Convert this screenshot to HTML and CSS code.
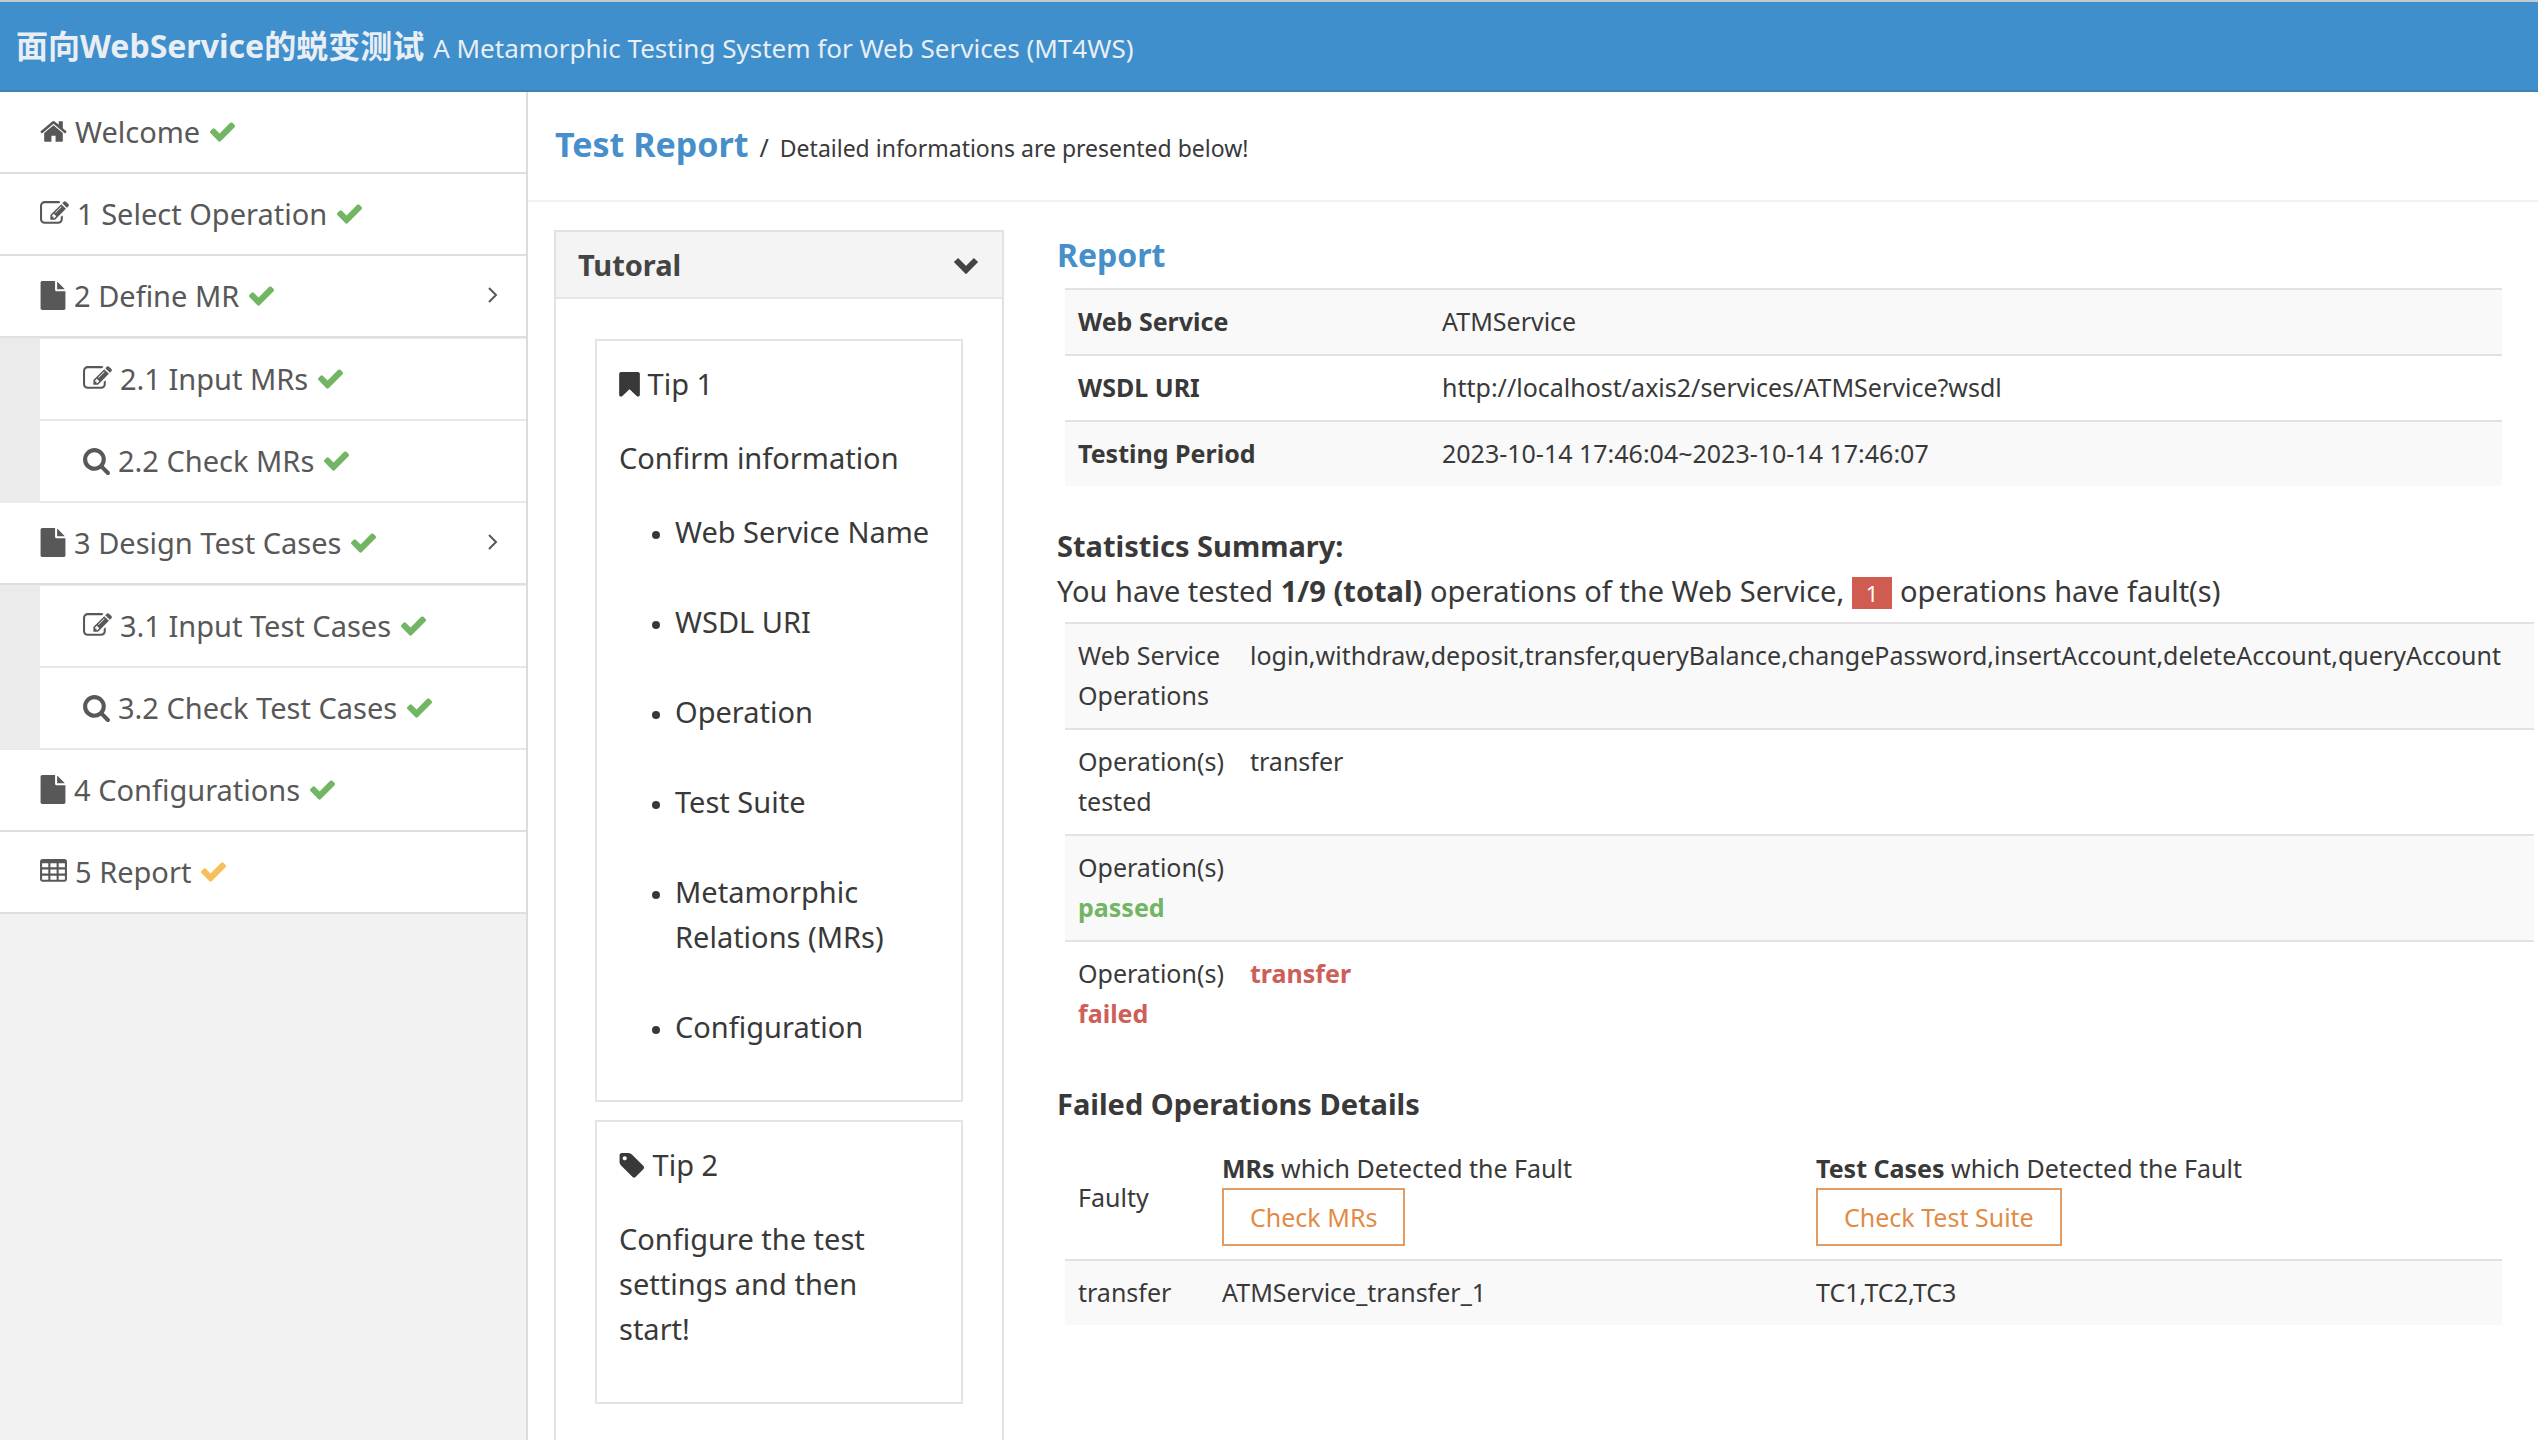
FILE: index.html
```html
<!DOCTYPE html>
<html lang="en">
<head>
<meta charset="utf-8">
<meta name="viewport" content="width=device-width, initial-scale=1">
<title>Test Report - MT4WS</title>
<link rel="stylesheet" href="styles.css">
</head>
<body>
<svg class="sprite" aria-hidden="true">
  <symbol id="home" viewBox="64 0 1664 1792"><path d="M1472 992v480q0 26-19 45t-45 19h-384v-384h-256v384h-384q-26 0-45-19t-19-45v-480q0-1 .5-3t.5-3l575-474 575 474q1 2 1 6zm223-69l-62 74q-8 9-21 11h-3q-13 0-21-7l-692-577-692 577q-12 8-24 7-13-2-21-11l-62-74q-8-10-7-23.5t11-21.5l719-599q32-26 76-26t76 26l244 204v-195q0-14 9-23t23-9h192q14 0 23 9t9 23v408l219 182q10 8 11 21.5t-7 23.5z"/></symbol>
  <symbol id="check" viewBox="0 0 1792 1792"><path d="M1671 566q0 40-28 68l-724 724-136 136q-28 28-68 28t-68-28l-136-136-362-362q-28-28-28-68t28-68l136-136q28-28 68-28t68 28l294 295 656-657q28-28 68-28t68 28l136 136q28 28 28 68z"/></symbol>
  <symbol id="edit" viewBox="0 0 1792 1792"><path d="M888 1184l116-116-152-152-116 116v56h96v96h56zm440-720q-16-16-33 1l-350 350q-17 17-1 33t33-1l350-350q17-17 1-33zm80 594v190q0 119-84.5 203.5t-203.5 84.5h-832q-119 0-203.5-84.5t-84.5-203.5v-832q0-119 84.5-203.5t203.5-84.5h832q63 0 117 25 15 7 18 23 3 17-9 29l-49 49q-14 14-32 8-23-6-45-6h-832q-66 0-113 47t-47 113v832q0 66 47 113t113 47h832q66 0 113-47t47-113v-126q0-13 9-22l64-64q15-15 35-7t20 29zm-96-738l288 288-672 672h-288v-288zm444 132l-92 92-288-288 92-92q28-28 68-28t68 28l152 152q28 28 28 68t-28 68z"/></symbol>
  <symbol id="search" viewBox="64 0 1664 1792"><path d="M1216 832q0-185-131.5-316.5t-316.5-131.5-316.5 131.5-131.5 316.5 131.5 316.5 316.5 131.5 316.5-131.5 131.5-316.5zm512 832q0 52-38 90t-90 38q-54 0-90-38l-343-342q-179 124-399 124-143 0-273.5-55.5t-225-150-150-225-55.5-273.5 55.5-273.5 150-225 225-150 273.5-55.5 273.5 55.5 225 150 150 225 55.5 273.5q0 220-124 399l343 343q37 37 37 90z"/></symbol>
  <symbol id="file" viewBox="128 0 1536 1792"><path d="M1152 512v-472q22 14 36 28l408 408q14 14 28 36h-472zm-128 32q0 40 28 68t68 28h544v1056q0 40-28 68t-68 28h-1344q-40 0-68-28t-28-68v-1600q0-40 28-68t68-28h800v544z"/></symbol>
  <symbol id="table" viewBox="64 0 1664 1792"><path fill-rule="evenodd" d="M224 128h1344q66 0 113 47t47 113v1088q0 66-47 113t-113 47h-1344q-66 0-113-47t-47-113v-1088q0-66 47-113t113-47zM192 384v256h384v-256zM704 384v256h384v-256zM1216 384v256h384v-256zM192 768v256h384v-256zM704 768v256h384v-256zM1216 768v256h384v-256zM192 1152v256h384v-256zM704 1152v256h384v-256zM1216 1152v256h384v-256z"/></symbol>
  <symbol id="bookmark" viewBox="256 0 1280 1792"><path d="M1420 128q23 0 44 9 33 13 52.500 41t19.500 62v1289q0 34-19.500 62t-52.500 41q-19 8-44 8-48 0-83-32l-441-424-441 424q-36 33-83 33-23 0-44-9-33-13-52.500-41t-19.500-62v-1289q0-34 19.500-62t52.500-41q21-9 44-9h1048z"/></symbol>
  <symbol id="tag" viewBox="128 0 1536 1792"><path d="M576 448q0-53-37.500-90.500t-90.500-37.500-90.500 37.500-37.500 90.500 37.500 90.500 90.500 37.500 90.500-37.500 37.500-90.500zm1067 576q0 53-37 90l-491 492q-39 37-91 37-53 0-90-37l-715-716q-38-37-64.500-101t-26.500-117v-416q0-52 38-90t90-38h416q53 0 117 26.500t102 64.500l715 714q37 39 37 91z"/></symbol>
</svg>

<header class="topbar">
  <h1 class="brand">面向WebService的蜕变测试</h1>
  <span class="tagline">A Metamorphic Testing System for Web Services (MT4WS)</span>
</header>

<div class="layout">
  <nav class="sidebar" aria-label="Steps">
    <ul class="menu">
      <li><a class="item" href="#"><svg class="icon w27"><use href="#home"/></svg> Welcome <svg class="icon ok"><use href="#check"/></svg></a></li>
      <li><a class="item" href="#"><svg class="icon"><use href="#edit"/></svg> 1 Select Operation <svg class="icon ok"><use href="#check"/></svg></a></li>
      <li>
        <a class="item" href="#"><svg class="icon w26"><use href="#file"/></svg> 2 Define MR <svg class="icon ok"><use href="#check"/></svg><svg class="arrow" viewBox="0 0 10 18"><path d="M1 2l7 7-7 7"/></svg></a>
        <ul class="submenu">
          <li><a class="item" href="#"><svg class="icon"><use href="#edit"/></svg> 2.1 Input MRs <svg class="icon ok"><use href="#check"/></svg></a></li>
          <li><a class="item" href="#"><svg class="icon w27"><use href="#search"/></svg> 2.2 Check MRs <svg class="icon ok"><use href="#check"/></svg></a></li>
        </ul>
      </li>
      <li>
        <a class="item" href="#"><svg class="icon w26"><use href="#file"/></svg> 3 Design Test Cases <svg class="icon ok"><use href="#check"/></svg><svg class="arrow" viewBox="0 0 10 18"><path d="M1 2l7 7-7 7"/></svg></a>
        <ul class="submenu">
          <li><a class="item" href="#"><svg class="icon"><use href="#edit"/></svg> 3.1 Input Test Cases <svg class="icon ok"><use href="#check"/></svg></a></li>
          <li><a class="item" href="#"><svg class="icon w27"><use href="#search"/></svg> 3.2 Check Test Cases <svg class="icon ok"><use href="#check"/></svg></a></li>
        </ul>
      </li>
      <li><a class="item" href="#"><svg class="icon w26"><use href="#file"/></svg> 4 Configurations <svg class="icon ok"><use href="#check"/></svg></a></li>
      <li><a class="item" href="#"><svg class="icon w27"><use href="#table"/></svg> 5 Report <svg class="icon current"><use href="#check"/></svg></a></li>
    </ul>
  </nav>

  <main class="content">
    <div class="page-head">
      <h2 class="title page-title">Test Report</h2>
      <span class="slash">/</span>
      <span class="note">Detailed informations are presented below!</span>
    </div>

    <div class="columns">
      <section class="panel">
        <div class="panel-head">
          <h3 class="panel-title">Tutoral</h3>
          <button class="toggle" type="button" aria-label="Collapse"><svg class="chevron" viewBox="0 0 26 18"><path d="M3 4l10 10 10-10"/></svg></button>
        </div>
        <div class="panel-body">
          <article class="tip">
            <p><svg class="icon w21"><use href="#bookmark"/></svg> Tip 1</p>
            <p>Confirm information</p>
            <ul class="checks">
              <li>Web Service Name</li>
              <li>WSDL URI</li>
              <li>Operation</li>
              <li>Test Suite</li>
              <li>Metamorphic Relations (MRs)</li>
              <li>Configuration</li>
            </ul>
          </article>
          <article class="tip">
            <p><svg class="icon w26"><use href="#tag"/></svg> Tip 2</p>
            <p>Configure the test settings and then start!</p>
          </article>
        </div>
      </section>

      <section class="report">
        <h2 class="title">Report</h2>
        <table class="grid info">
          <tbody>
            <tr><th scope="row">Web Service</th><td>ATMService</td></tr>
            <tr><th scope="row">WSDL URI</th><td>http://localhost/axis2/services/ATMService?wsdl</td></tr>
            <tr><th scope="row">Testing Period</th><td>2023-10-14 17:46:04~2023-10-14 17:46:07</td></tr>
          </tbody>
        </table>

        <h3 class="subtitle stats-title">Statistics Summary:</h3>
        <p class="summary">You have tested <b>1/9 (total)</b> operations of the Web Service, <span class="badge">1</span> operations have fault(s)</p>
        <table class="grid stats">
          <tbody>
            <tr><td>Web Service Operations</td><td>login,withdraw,deposit,transfer,queryBalance,changePassword,insertAccount,deleteAccount,queryAccount</td></tr>
            <tr><td>Operation(s) tested</td><td>transfer</td></tr>
            <tr><td>Operation(s) <b class="pass">passed</b></td><td></td></tr>
            <tr><td>Operation(s) <b class="fail">failed</b></td><td><b class="fail">transfer</b></td></tr>
          </tbody>
        </table>

        <h3 class="subtitle faults-title">Failed Operations Details</h3>
        <table class="grid faults">
          <thead>
            <tr>
              <td class="col-op">Faulty</td>
              <td class="col-mr"><b>MRs</b> which Detected the Fault<br><button class="btn" type="button">Check MRs</button></td>
              <td><b>Test Cases</b> which Detected the Fault<br><button class="btn" type="button">Check Test Suite</button></td>
            </tr>
          </thead>
          <tbody>
            <tr><td>transfer</td><td>ATMService_transfer_1</td><td>TC1,TC2,TC3</td></tr>
          </tbody>
        </table>
      </section>
    </div>
  </main>
</div>
</body>
</html>
```
FILE: styles.css
```css
* { box-sizing: border-box; }

body {
  margin: 0;
  min-height: 100vh;
  display: flex;
  flex-direction: column;
  background: #fff;
  color: #393939;
  font-family: "Noto Sans", "Noto Sans CJK SC", sans-serif;
  font-size: 29px;
  line-height: 45px;
}

h1, h2, h3, p, ul { margin: 0; padding: 0; }
ul { list-style: none; }
a { color: inherit; text-decoration: none; }
button { font: inherit; cursor: pointer; }

.sprite { position: absolute; width: 0; height: 0; }

.icon {
  width: 29px;
  height: 29px;
  vertical-align: -4px;
  fill: currentColor;
}
.w27 { width: 27px; }
.w26 { width: 26px; }
.w21 { width: 21px; }
.ok { color: #72b563; }
.current { color: #f6bf57; }

/* Top bar */
.topbar {
  display: flex;
  align-items: baseline;
  gap: 9px;
  height: 92px;
  padding: 21px 16px 0;
  background: #3f8fcc;
  border-top: 2px solid #c3cbd2;
  border-bottom: 2px solid #4380b0;
  color: #e8eef4;
}
.brand { font-size: 32px; font-weight: 700; }
.tagline { font-size: 26px; }

.layout { flex: 1; display: flex; }

/* Sidebar */
.sidebar {
  flex: 0 0 528px;
  background: #f2f2f2;
  border-right: 2px solid #dcdcdc;
}
.item {
  display: flex;
  align-items: center;
  gap: 8px;
  height: 82px;
  padding: 0 28px 2px 40px;
  background: #fff;
  border-bottom: 2px solid #dfdfdf;
  color: #585858;
}
.item .icon { flex: none; }
.arrow {
  width: 10px;
  height: 18px;
  margin-left: auto;
  fill: none;
  stroke: #585858;
  stroke-width: 2;
}
.submenu {
  padding-left: 40px;
  background: #ebebeb;
  border-top: 1px solid #ebebeb;
}
.submenu .item { padding-left: 43px; border-bottom-color: #e8e8e8; }

/* Page heading */
.content {
  flex: 1;
  min-width: 0;
  display: flex;
  flex-direction: column;
}
.page-head {
  display: flex;
  align-items: baseline;
  gap: 11px;
  height: 110px;
  padding: 30px 27px 0;
  border-bottom: 2px solid #f2f2f2;
}
.title { font-size: 32px; font-weight: 700; color: #478fca; }
.page-title { font-size: 34px; }
.slash { font-size: 25px; }
.note { font-size: 23px; }

.columns {
  flex: 1;
  display: flex;
  gap: 53px;
  padding: 28px 36px 0 26px;
}

/* Tutorial panel */
.panel {
  flex: 0 0 450px;
  border: 2px solid #e2e2e2;
  border-bottom: 0;
}
.panel-head {
  display: flex;
  align-items: center;
  justify-content: space-between;
  height: 67px;
  padding: 0 22px;
  background: #f4f4f4;
  border-bottom: 2px solid #e6e6e6;
}
.panel-title { font-size: 29px; font-weight: 700; color: #444; }
.toggle { display: flex; padding: 0; border: 0; background: none; }
.chevron {
  width: 28px;
  height: 18px;
  fill: none;
  stroke: #444;
  stroke-width: 6;
}
.panel-body {
  display: flex;
  flex-direction: column;
  gap: 18px;
  padding: 40px 39px 32px;
}
.tip {
  display: flex;
  flex-direction: column;
  gap: 29px;
  padding: 20px 22px 51px;
  border: 2px solid #e4e4e4;
}
.tip p { padding-right: 22px; }
.checks {
  display: flex;
  flex-direction: column;
  gap: 45px;
  padding-left: 56px;
  list-style: disc;
}
.checks li::marker { font-size: 22px; }

/* Report */
.report { flex: 1; min-width: 0; padding-top: 2px; }
.grid {
  width: calc(100% - 8px);
  margin: 11px 0 0 8px;
  border-collapse: collapse;
  font-size: 25px;
  line-height: 40px;
}
.grid th, .grid td {
  padding: 11px 13px 13px;
  border-top: 2px solid #e2e2e2;
  text-align: left;
  vertical-align: top;
}
.grid tbody tr:nth-child(odd) { background: #f9f9f9; }
.info th { width: 364px; }

.subtitle { font-size: 29px; font-weight: 700; }
.stats-title { margin-top: 37px; }
.summary { white-space: nowrap; }
.badge {
  display: inline-block;
  padding: 0 14px;
  background: #d05b50;
  color: #fff;
  font-size: 22px;
  line-height: 32px;
}
.stats { width: calc(100% + 24px); margin-top: 9px; }
.stats td:first-child { width: 172px; }
.stats td:last-child { white-space: nowrap; }
.pass { color: #72b563; }
.fail { color: #cc6059; }

.faults-title { margin-top: 35px; }
.grid thead td { border-top: 0; vertical-align: middle; }
.col-op { width: 144px; }
.col-mr { width: 594px; }
.btn {
  padding: 7px 26px;
  background: #fff;
  border: 2px solid #e39b64;
  color: #e28b46;
}
```
